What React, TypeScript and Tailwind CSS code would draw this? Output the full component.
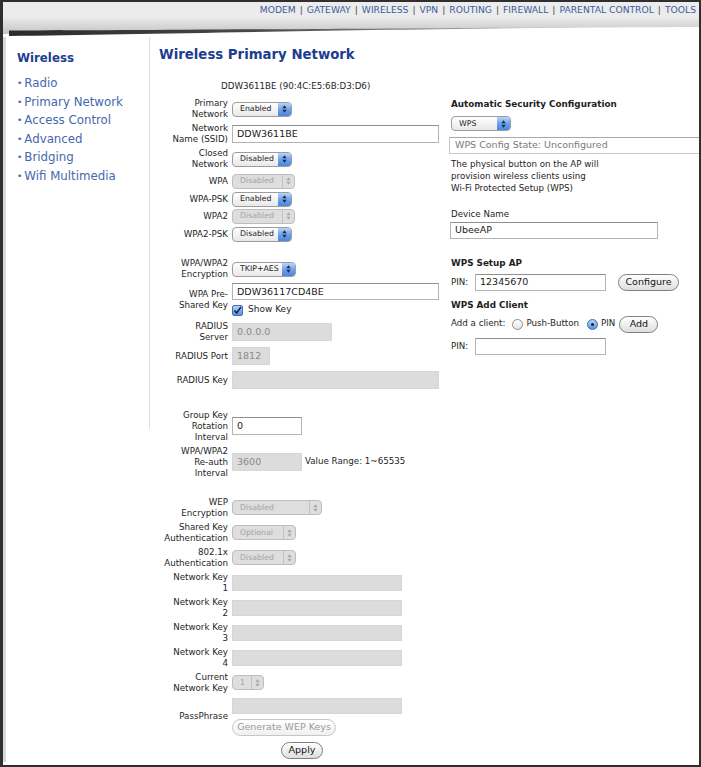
import React from 'react';

const navItems = ['MODEM', 'GATEWAY', 'WIRELESS', 'VPN', 'ROUTING', 'FIREWALL', 'PARENTAL CONTROL', 'TOOLS'];
const sideLinks = ['Radio', 'Primary Network', 'Access Control', 'Advanced', 'Bridging', 'Wifi Multimedia'];

function Arrows({ color }: { color: string }) {
  return (
    <svg width="5" height="8" viewBox="0 0 5 8">
      <path d="M2.5 0.3 L4.7 3.2 H0.3 Z M2.5 7.7 L4.7 4.8 H0.3 Z" fill={color} />
    </svg>
  );
}

function Select({ value, w, disabled }: { value: string; w: string; disabled?: boolean }) {
  if (disabled) {
    return (
      <div className={`${w} flex h-[15px] items-center rounded-[4px] border border-[#bdbdbd] bg-[#dedede] text-[7.8px] text-[#a3a3a3]`}>
        <span className="flex-1 pl-[7px]">{value}</span>
        <span className="flex h-full w-[12px] items-center justify-center border-l border-[#c2c2c2]">
          <Arrows color="#a8a8a8" />
        </span>
      </div>
    );
  }
  return (
    <div className={`${w} flex h-[15px] items-center rounded-[4px] border border-[#9c9c9c] bg-gradient-to-b from-white to-[#e8e8e8] text-[7.8px] text-[#222]`}>
      <span className="flex-1 pl-[7px]">{value}</span>
      <span className="flex h-full w-[13px] items-center justify-center rounded-r-[3px] bg-gradient-to-b from-[#b9d4f7] via-[#6ea2ea] to-[#4a86dc]">
        <Arrows color="#1b2b4e" />
      </span>
    </div>
  );
}

function Input({ value, w, h = 'h-[18px]', disabled }: { value?: string; w: string; h?: string; disabled?: boolean }) {
  return (
    <div
      className={`${w} ${h} flex shrink-0 items-center pl-[4px] text-[9.5px] ${
        disabled
          ? 'border border-[#d6d6d6] bg-[#dcdcdc] text-[#8a8a8a]'
          : 'border border-[#b5b5b5] border-t-[#8f8f8f] bg-white text-[#1a1a1a]'
      }`}
    >
      {value}
    </div>
  );
}

function Btn({ label, w, disabled }: { label: string; w: string; disabled?: boolean }) {
  return (
    <div
      className={`${w} flex h-[17px] items-center justify-center rounded-full border text-[9.5px] ${
        disabled
          ? 'border-[#c6c6c6] bg-gradient-to-b from-white to-[#f0f0f0] text-[#9a9a9a]'
          : 'border-[#7f7f7f] bg-gradient-to-b from-white to-[#dedede] text-[#111]'
      }`}
    >
      {label}
    </div>
  );
}

function Radio({ on }: { on?: boolean }) {
  return on ? (
    <span className="flex h-[11px] w-[11px] items-center justify-center rounded-full border border-[#3d6fb8] bg-gradient-to-b from-[#b6d2f6] to-[#5a94e0]">
      <span className="block h-[3px] w-[3px] rounded-full bg-[#10203e]" />
    </span>
  ) : (
    <span className="block h-[11px] w-[11px] rounded-full border border-[#8c8c8c] bg-gradient-to-b from-white to-[#e4e4e4]" />
  );
}

function Row({ label, h, children, mt }: { label: React.ReactNode; h: string; children?: React.ReactNode; mt?: string }) {
  return (
    <div className={`flex items-center ${h} ${mt ?? ''}`}>
      <div className="w-[69px] shrink-0 text-right leading-[11px]">{label}</div>
      <div className="ml-[4px] flex items-center">{children}</div>
    </div>
  );
}

export default function App() {
  return (
    <div className="h-[767px] w-[701px] overflow-hidden border-b-2 border-l-[3px] border-r-2 border-t-2 border-[#2f2f2f] bg-white font-['DejaVu_Sans',sans-serif] text-[8.7px] text-[#1e1e1e]">
      {/* top nav */}
      <div className="flex h-[15px] items-center justify-end bg-[#ececec] pr-[3px] text-[9.2px] text-[#3c5d9c]">
        {navItems.map((n, i) => (
          <span key={n} className="flex">
            {i > 0 && <span className="px-[4px] text-[#444]">|</span>}
            {n}
          </span>
        ))}
      </div>
      {/* swoosh band */}
      <svg width="696" height="20" viewBox="0 0 696 20" className="block">
        <defs>
          <linearGradient id="hdrBand" x1="0" y1="0" x2="0" y2="20" gradientUnits="userSpaceOnUse">
            <stop offset="0" stopColor="#ebebeb" />
            <stop offset="1" stopColor="#bdbdbd" />
          </linearGradient>
          <linearGradient id="hdrSwoosh" x1="0" y1="0" x2="620" y2="0" gradientUnits="userSpaceOnUse">
            <stop offset="0" stopColor="#2a2a2a" />
            <stop offset="0.4" stopColor="#474747" />
            <stop offset="0.8" stopColor="#a8a8a8" />
            <stop offset="1" stopColor="#e0e0e0" />
          </linearGradient>
        </defs>
        <path d="M0 0 H696 V10 C520 10.5 300 12.5 0 17 Z" fill="url(#hdrBand)" />
        <path d="M6 13.5 C150 13.5 330 11.5 620 10 C330 13 150 17 6 19 Z" fill="url(#hdrSwoosh)" />
      </svg>

      <div className="flex border-l-[3px] border-[#d9d9d9]">
        {/* sidebar */}
        <div className="h-[392px] w-[144px] shrink-0 border-r border-[#dedede] pl-[11px] pt-[13px]">
          <div className="text-[11.8px] font-bold leading-[16px] text-[#1d3d8f]">Wireless</div>
          <div className="mt-[8px]">
            {sideLinks.map((l) => (
              <div key={l} className="flex items-center text-[11.8px] leading-[18.6px] text-[#4568ad]">
                <span className="mr-[2px] text-[9px] text-[#4568ad]">•</span>
                {l}
              </div>
            ))}
          </div>
        </div>

        {/* main */}
        <div className="flex min-w-0 flex-1 overflow-hidden pl-[9px]">
          <div className="w-[285px] shrink-0">
            <div className="mt-[9px] text-[13.3px] font-bold leading-[17px] text-[#1d3d8f]">Wireless Primary Network</div>
            <div className="mt-[18px] pl-[62px] leading-[11px]">DDW3611BE (90:4C:E5:6B:D3:D6)</div>

            <div className="mt-[5px]">
              <Row h="h-[24px]" label={<>Primary<br />Network</>}>
                <Select value="Enabled" w="w-[60px]" />
              </Row>
              <Row h="h-[26px]" label={<>Network<br />Name (SSID)</>}>
                <Input value="DDW3611BE" w="w-[207px]" />
              </Row>
              <Row h="h-[24px]" label={<>Closed<br />Network</>}>
                <Select value="Disabled" w="w-[60px]" />
              </Row>
              <Row h="h-[20px]" label="WPA">
                <Select value="Disabled" w="w-[63px]" disabled />
              </Row>
              <Row h="h-[16px]" label="WPA-PSK">
                <Select value="Enabled" w="w-[60px]" />
              </Row>
              <Row h="h-[18px]" label="WPA2">
                <Select value="Disabled" w="w-[63px]" disabled />
              </Row>
              <Row h="h-[18px]" label="WPA2-PSK">
                <Select value="Disabled" w="w-[60px]" />
              </Row>

              <Row h="h-[24px]" mt="mt-[14px]" label={<>WPA/WPA2<br />Encryption</>}>
                <Select value="TKIP+AES" w="w-[64px]" />
              </Row>
              <Row h="h-[38px]" label={<>WPA Pre-<br />Shared Key</>}>
                <div className="flex flex-col">
                  <Input value="DDW36117CD4BE" w="w-[207px]" h="h-[17px]" />
                  <div className="mt-[3px] flex items-center">
                    <span className="flex h-[11px] w-[11px] items-center justify-center rounded-[2px] border border-[#3d6fb8] bg-gradient-to-b from-[#b6d2f6] to-[#5a94e0]">
                      <svg width="9" height="9" viewBox="0 0 9 9">
                        <path d="M1.5 4.5 L3.6 7 L8 1" stroke="#10203e" strokeWidth="1.6" fill="none" />
                      </svg>
                    </span>
                    <span className="ml-[5px] text-[9px]">Show Key</span>
                  </div>
                </div>
              </Row>
              <Row h="h-[26px]" label={<>RADIUS<br />Server</>}>
                <Input value="0.0.0.0" w="w-[100px]" disabled />
              </Row>
              <Row h="h-[22px]" label="RADIUS Port">
                <Input value="1812" w="w-[38px]" disabled />
              </Row>
              <Row h="h-[26px]" label="RADIUS Key">
                <Input w="w-[207px]" disabled />
              </Row>

              <Row h="h-[34px]" mt="mt-[16px]" label={<>Group Key<br />Rotation<br />Interval</>}>
                <Input value="0" w="w-[70px]" />
              </Row>
              <Row h="h-[38px]" label={<>WPA/WPA2<br />Re-auth<br />Interval</>}>
                <Input value="3600" w="w-[70px]" disabled />
                <span className="ml-[3px] whitespace-nowrap">Value Range: 1~65535</span>
              </Row>

              <Row h="h-[25px]" mt="mt-[14px]" label={<>WEP<br />Encryption</>}>
                <Select value="Disabled" w="w-[90px]" disabled />
              </Row>
              <Row h="h-[25px]" label={<>Shared Key<br />Authentication</>}>
                <Select value="Optional" w="w-[64px]" disabled />
              </Row>
              <Row h="h-[25px]" label={<>802.1x<br />Authentication</>}>
                <Select value="Disabled" w="w-[64px]" disabled />
              </Row>
              {[1, 2, 3, 4].map((n) => (
                <Row key={n} h="h-[25px]" label={<>Network Key<br />{n}</>}>
                  <Input w="w-[170px]" h="h-[16px]" disabled />
                </Row>
              ))}
              <Row h="h-[25px]" label={<>Current<br />Network Key</>}>
                <Select value="1" w="w-[32px]" disabled />
              </Row>
              <Row h="h-[43px]" label="PassPhrase">
                <div className="flex flex-col">
                  <Input w="w-[170px]" h="h-[16px]" disabled />
                  <div className="mt-[5px]">
                    <Btn label="Generate WEP Keys" w="w-[104px]" disabled />
                  </div>
                </div>
              </Row>
              <div className="flex h-[24px] items-center pl-[122px]">
                <Btn label="Apply" w="w-[42px]" />
              </div>
            </div>
          </div>

          {/* right column */}
          <div className="ml-[7px] w-[260px] shrink-0 pt-[62px]">
            <div className="text-[8.8px] font-bold leading-[11px]">Automatic Security Configuration</div>
            <div className="mt-[6px]">
              <Select value="WPS" w="w-[60px]" />
            </div>
            <div className="-ml-[2px] mt-[6px] flex h-[17px] w-[300px] items-center border border-[#c8c8c8] border-t-[#a8a8a8] pl-[5px] text-[9.5px] text-[#7a7a7a]">
              WPS Config State: Unconfigured
            </div>
            <div className="mt-[4px] leading-[12px]">
              The physical button on the AP will
              <br />
              provision wireless clients using
              <br />
              Wi-Fi Protected Setup (WPS)
            </div>
            <div className="mt-[15px] leading-[11px]">Device Name</div>
            <div className="-ml-[1px] mt-[2px]">
              <Input value="UbeeAP" w="w-[208px]" h="h-[17px]" />
            </div>
            <div className="mt-[19px] text-[8.8px] font-bold leading-[11px]">WPS Setup AP</div>
            <div className="mt-[4px] flex h-[19px] items-center">
              <span className="w-[24px]">PIN:</span>
              <Input value="12345670" w="w-[131px]" h="h-[17px]" />
              <div className="ml-[12px]">
                <Btn label="Configure" w="w-[61px]" />
              </div>
            </div>
            <div className="mt-[8px] text-[8.8px] font-bold leading-[11px]">WPS Add Client</div>
            <div className="mt-[4px] flex h-[18px] items-center">
              <span>Add a client:</span>
              <span className="ml-[7px]"><Radio /></span>
              <span className="ml-[3px]">Push-Button</span>
              <span className="ml-[8px]"><Radio on /></span>
              <span className="ml-[3px]">PIN</span>
              <div className="ml-[4px]">
                <Btn label="Add" w="w-[39px]" />
              </div>
            </div>
            <div className="mt-[4px] flex h-[19px] items-center">
              <span className="w-[24px]">PIN:</span>
              <Input w="w-[131px]" h="h-[17px]" />
            </div>
          </div>
        </div>
      </div>
    </div>
  );
}
